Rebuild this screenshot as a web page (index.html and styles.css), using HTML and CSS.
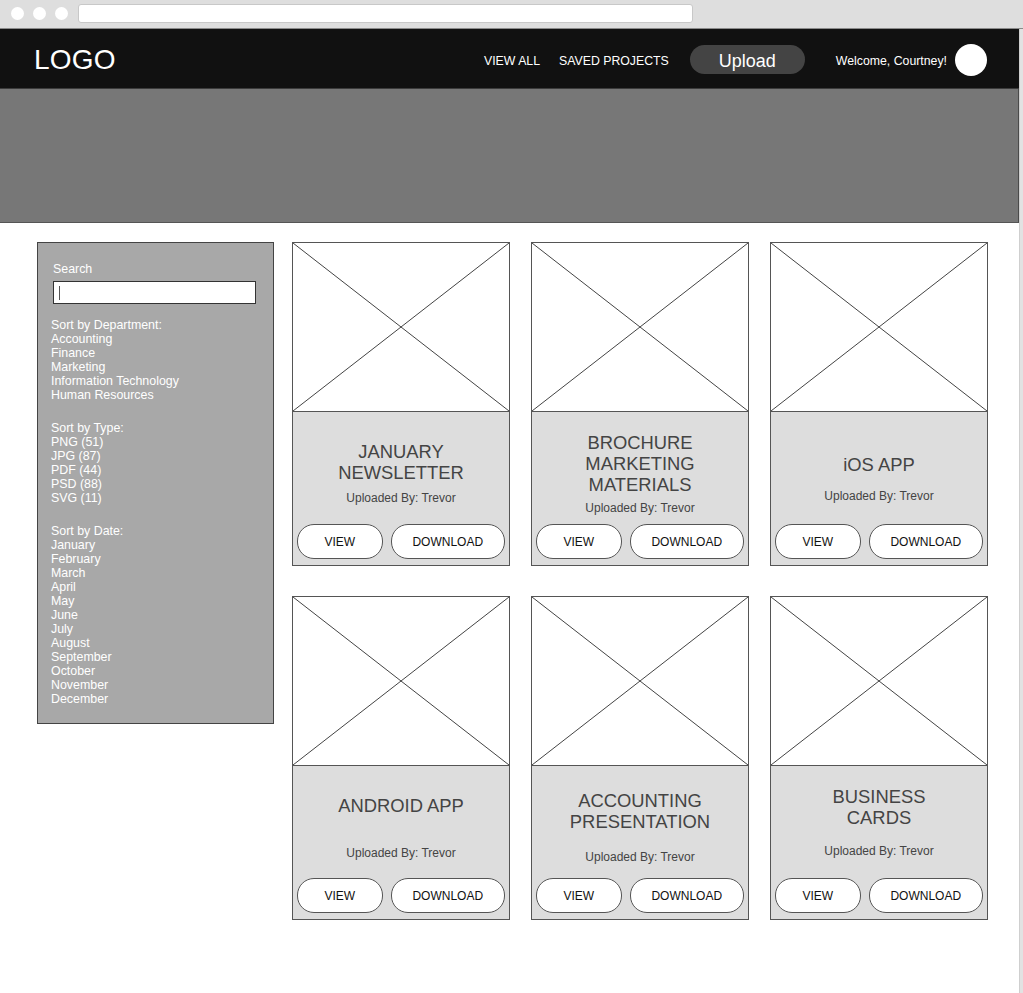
FILE: index.html
```html
<!DOCTYPE html>
<html>
<head>
<meta name="viewport" content="width=device-width, initial-scale=1">
<link rel="stylesheet" href="styles.css">
</head>
<body>

<div class="chrome">
  <span class="dot"></span>
  <span class="dot"></span>
  <span class="dot"></span>
  <div class="address"></div>
</div>

<div class="window">
  <header class="topbar">
    <div class="logo">LOGO</div>
    <nav class="nav">
      <a href="#" class="nav-link">VIEW ALL</a>
      <a href="#" class="nav-link saved">SAVED PROJECTS</a>
      <button class="upload">Upload</button>
      <span class="welcome">Welcome, Courtney!</span>
      <span class="avatar"></span>
    </nav>
  </header>

  <div class="banner"></div>

  <main class="content">
    <aside class="sidebar">
      <div class="search-label">Search</div>
      <div class="search-box"><span class="caret"></span></div>

      <ul class="filter">
        <li class="filter-title">Sort by Department:</li>
        <li>Accounting</li>
        <li>Finance</li>
        <li>Marketing</li>
        <li>Information Technology</li>
        <li>Human Resources</li>
      </ul>

      <ul class="filter">
        <li class="filter-title">Sort by Type:</li>
        <li>PNG (51)</li>
        <li>JPG (87)</li>
        <li>PDF (44)</li>
        <li>PSD (88)</li>
        <li>SVG (11)</li>
      </ul>

      <ul class="filter">
        <li class="filter-title">Sort by Date:</li>
        <li>January</li>
        <li>February</li>
        <li>March</li>
        <li>April</li>
        <li>May</li>
        <li>June</li>
        <li>July</li>
        <li>August</li>
        <li>September</li>
        <li>October</li>
        <li>November</li>
        <li>December</li>
      </ul>
    </aside>

    <section class="grid">
      <div class="card">
        <svg class="thumb" viewBox="0 0 100 100" preserveAspectRatio="none">
          <line x1="0" y1="0" x2="100" y2="100" vector-effect="non-scaling-stroke"/>
          <line x1="100" y1="0" x2="0" y2="100" vector-effect="non-scaling-stroke"/>
        </svg>
        <div class="card-body">
          <div class="card-text">
            <h3 class="card-title">JANUARY<br>NEWSLETTER</h3>
            <p class="card-meta">Uploaded By: Trevor</p>
          </div>
          <div class="card-actions">
            <button class="pill view">VIEW</button>
            <button class="pill download">DOWNLOAD</button>
          </div>
        </div>
      </div>

      <div class="card">
        <svg class="thumb" viewBox="0 0 100 100" preserveAspectRatio="none">
          <line x1="0" y1="0" x2="100" y2="100" vector-effect="non-scaling-stroke"/>
          <line x1="100" y1="0" x2="0" y2="100" vector-effect="non-scaling-stroke"/>
        </svg>
        <div class="card-body">
          <div class="card-text tight">
            <h3 class="card-title">BROCHURE<br>MARKETING<br>MATERIALS</h3>
            <p class="card-meta">Uploaded By: Trevor</p>
          </div>
          <div class="card-actions">
            <button class="pill view">VIEW</button>
            <button class="pill download">DOWNLOAD</button>
          </div>
        </div>
      </div>

      <div class="card">
        <svg class="thumb" viewBox="0 0 100 100" preserveAspectRatio="none">
          <line x1="0" y1="0" x2="100" y2="100" vector-effect="non-scaling-stroke"/>
          <line x1="100" y1="0" x2="0" y2="100" vector-effect="non-scaling-stroke"/>
        </svg>
        <div class="card-body">
          <div class="card-text low">
            <h3 class="card-title">iOS APP</h3>
            <p class="card-meta">Uploaded By: Trevor</p>
          </div>
          <div class="card-actions">
            <button class="pill view">VIEW</button>
            <button class="pill download">DOWNLOAD</button>
          </div>
        </div>
      </div>

      <div class="card">
        <svg class="thumb" viewBox="0 0 100 100" preserveAspectRatio="none">
          <line x1="0" y1="0" x2="100" y2="100" vector-effect="non-scaling-stroke"/>
          <line x1="100" y1="0" x2="0" y2="100" vector-effect="non-scaling-stroke"/>
        </svg>
        <div class="card-body">
          <div class="card-text wide">
            <h3 class="card-title">ANDROID APP</h3>
            <p class="card-meta">Uploaded By: Trevor</p>
          </div>
          <div class="card-actions">
            <button class="pill view">VIEW</button>
            <button class="pill download">DOWNLOAD</button>
          </div>
        </div>
      </div>

      <div class="card">
        <svg class="thumb" viewBox="0 0 100 100" preserveAspectRatio="none">
          <line x1="0" y1="0" x2="100" y2="100" vector-effect="non-scaling-stroke"/>
          <line x1="100" y1="0" x2="0" y2="100" vector-effect="non-scaling-stroke"/>
        </svg>
        <div class="card-body">
          <div class="card-text loose">
            <h3 class="card-title">ACCOUNTING<br>PRESENTATION</h3>
            <p class="card-meta">Uploaded By: Trevor</p>
          </div>
          <div class="card-actions">
            <button class="pill view">VIEW</button>
            <button class="pill download">DOWNLOAD</button>
          </div>
        </div>
      </div>

      <div class="card">
        <svg class="thumb" viewBox="0 0 100 100" preserveAspectRatio="none">
          <line x1="0" y1="0" x2="100" y2="100" vector-effect="non-scaling-stroke"/>
          <line x1="100" y1="0" x2="0" y2="100" vector-effect="non-scaling-stroke"/>
        </svg>
        <div class="card-body">
          <div class="card-text high">
            <h3 class="card-title">BUSINESS<br>CARDS</h3>
            <p class="card-meta">Uploaded By: Trevor</p>
          </div>
          <div class="card-actions">
            <button class="pill view">VIEW</button>
            <button class="pill download">DOWNLOAD</button>
          </div>
        </div>
      </div>
    </section>
  </main>
</div>

</body>
</html>
```

FILE: styles.css
```css
* {
  box-sizing: border-box;
}

html, body {
  margin: 0;
  font-family: "Liberation Sans", Arial, Helvetica, sans-serif;
  background: #e2e2e2;
}

/* Fake browser bar */
.chrome {
  height: 29px;
  display: flex;
  align-items: center;
  padding: 0 0 1px 11px;
  gap: 9px;
  background: #dedede;
  border-bottom: 1px solid #8a8a8a;
}

.dot {
  width: 13px;
  height: 13px;
  border-radius: 50%;
  background: #fff;
}

.address {
  margin-left: 1px;
  width: 615px;
  height: 19px;
  background: #fff;
  border: 1px solid #c8c8c8;
  border-radius: 3px;
}

.window {
  width: 1020px;
  min-height: 964px;
  background: #fff;
  border-right: 1px solid #cfcfcf;
}

/* Header */
.topbar {
  height: 60px;
  display: flex;
  align-items: center;
  justify-content: space-between;
  padding: 2px 32px 0 34px;
  background: #111;
  border-bottom: 1px solid #3c3c3c;
}

.logo {
  color: #fff;
  font-size: 28px;
  letter-spacing: 0.2px;
}

.nav {
  display: flex;
  align-items: center;
}

.nav-link {
  color: #fff;
  font-size: 12.3px;
  text-decoration: none;
  margin-right: 19px;
  padding-top: 2px;
}

.saved {
  margin-right: 21px;
}

.upload {
  width: 115px;
  height: 29px;
  border: none;
  border-radius: 15px;
  background: #444;
  color: #fff;
  font-family: inherit;
  font-size: 18px;
  padding: 3px 0 0 0;
  margin-right: 31px;
}

.welcome {
  color: #fff;
  font-size: 12.3px;
  margin-right: 8px;
  padding-top: 2px;
}

.avatar {
  width: 32px;
  height: 32px;
  border-radius: 50%;
  background: #fff;
}

/* Grey hero strip */
.banner {
  height: 134px;
  background: #777;
  border-bottom: 1px solid #555;
  border-right: 1px solid #4a4a4a;
}

/* Main area */
.content {
  display: flex;
  align-items: flex-start;
  padding: 19px 0 60px 37px;
}

.sidebar {
  width: 237px;
  padding: 19px 14px 17px 13px;
  background: #a8a8a8;
  border: 1px solid #444;
  color: #fff;
  font-size: 12.4px;
  line-height: 14px;
}

.search-label {
  padding-left: 2px;
  margin-bottom: 5px;
}

.search-box {
  width: 203px;
  height: 23px;
  margin-left: 2px;
  padding: 4px 0 0 5px;
  background: #fff;
  border: 1px solid #333;
}

.caret {
  display: block;
  width: 1px;
  height: 14px;
  background: #555;
}

.filter {
  list-style: none;
  margin: 14px 0 0 0;
  padding: 0;
}

.filter + .filter {
  margin-top: 19px;
}

.grid {
  margin-left: 18px;
  display: grid;
  grid-template-columns: repeat(3, 218px);
  column-gap: 21px;
  row-gap: 30px;
}

.card {
  height: 324px;
  display: flex;
  flex-direction: column;
  border: 1px solid #555;
  background: #ddd;
}

.thumb {
  display: block;
  width: 100%;
  height: 169px;
  background: #fff;
  border-bottom: 1px solid #555;
  stroke: #444;
  stroke-width: 1;
}

.card-body {
  flex: 1;
  display: flex;
  flex-direction: column;
}

.card-text {
  flex: 1;
  display: flex;
  flex-direction: column;
  align-items: center;
  justify-content: center;
  gap: 8px;
  padding-top: 10px;
  color: #444;
  text-align: center;
}

.card-text.tight {
  gap: 6px;
}

.card-text.low {
  padding-top: 20px;
  gap: 14px;
}

.card-text.wide {
  gap: 30px;
}

.card-text.loose {
  gap: 18px;
}

.card-text.high {
  padding-top: 0;
  gap: 16px;
}

.card-title {
  margin: 0;
  font-size: 18.4px;
  font-weight: normal;
  line-height: 21px;
}

.card-meta {
  margin: 0;
  font-size: 12px;
}

.card-actions {
  display: flex;
  gap: 8px;
  padding: 0 4px 6px 4px;
}

.pill {
  height: 35px;
  background: #fff;
  border: 1px solid #555;
  border-radius: 17px;
  color: #111;
  font-family: inherit;
  font-size: 12px;
  padding: 0;
}

.view {
  width: 86px;
}

.download {
  width: 115px;
}
```
